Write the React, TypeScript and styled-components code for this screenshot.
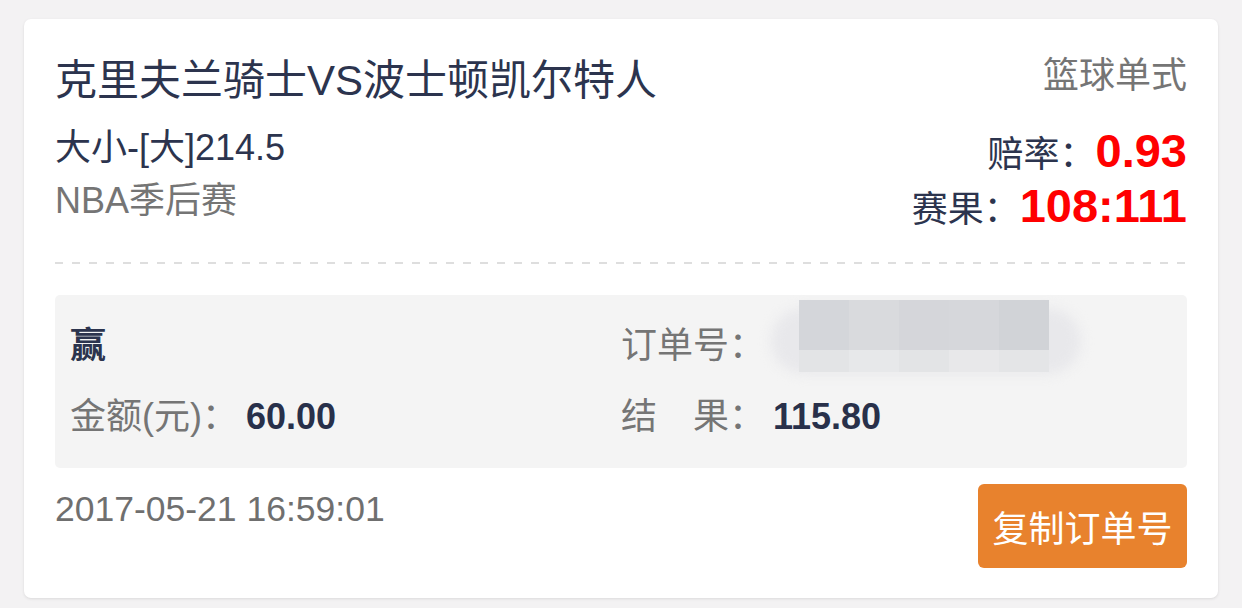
import React from "react";
import styled, { createGlobalStyle } from "styled-components";

const Global = createGlobalStyle`
  html, body { margin: 0; padding: 0; background: #f3f2f3; }
  body { font-family: "Liberation Sans", "Noto Sans CJK SC", sans-serif; }
`;

const Page = styled.div`
  padding: 19px 24px 10px;
`;

const Card = styled.div`
  background: #fff;
  border-radius: 7px;
  box-shadow: 0 1px 3px rgba(0, 0, 0, 0.1);
  padding: 32px 31px 30px;
`;

const Header = styled.div`
  display: flex;
  justify-content: space-between;
  align-items: flex-start;
`;

const LeftCol = styled.div`
  display: flex;
  flex-direction: column;
`;

const RightCol = styled.div`
  display: flex;
  flex-direction: column;
  align-items: flex-end;
`;

const Title = styled.div`
  font-size: 42px;
  line-height: 60px;
  color: #2c344e;
`;

const Line = styled.div<{ $muted?: boolean; $top?: number }>`
  font-size: 36px;
  line-height: 53px;
  margin-top: ${(p) => p.$top ?? 0}px;
  color: ${(p) => (p.$muted ? "#757575" : "#2c344e")};
`;

const Kind = styled.div`
  font-size: 36px;
  line-height: 50px;
  color: #757575;
  margin-bottom: 22px;
`;

const StatRow = styled.div`
  display: flex;
  align-items: baseline;
  height: 55px;
  line-height: 55px;
`;

const StatLabel = styled.span`
  font-size: 36px;
  color: #2c344e;
`;

const StatValue = styled.span`
  font-size: 47px;
  font-weight: bold;
  color: #ff0000;
`;

const Divider = styled.div`
  margin-top: 29px;
  height: 2px;
  background-image: repeating-linear-gradient(
    to right,
    #dedede 0,
    #dedede 8px,
    transparent 8px,
    transparent 17px
  );
`;

const InfoBox = styled.div`
  margin-top: 31px;
  background: #f4f4f4;
  border-radius: 5px;
  padding: 26px 15px 26px;
  display: grid;
  grid-template-columns: 1fr 1fr;
  row-gap: 21px;
`;

const Cell = styled.div`
  display: flex;
  align-items: center;
  height: 50px;
  font-size: 36px;
  line-height: 50px;
`;

const Outcome = styled.span`
  font-weight: bold;
  color: #2c344e;
`;

const InfoLabel = styled.span`
  color: #757575;
  white-space: pre;
`;

const InfoValue = styled.span`
  margin-left: 8px;
  font-size: 36px;
  font-weight: bold;
  color: #28304a;
`;

const Redacted = styled.div`
  position: relative;
  width: 324px;
  height: 78px;
  margin: -21px 0 -7px 2px;
`;

const Halo = styled.div`
  position: absolute;
  left: 4px;
  right: 10px;
  top: 8px;
  bottom: 4px;
  border-radius: 36px;
  background: #e8e8eb;
  filter: blur(6px);
`;

const PixelGrid = styled.div`
  position: absolute;
  left: 32px;
  top: 0;
  display: grid;
  grid-template-columns: repeat(5, 50px);
  grid-template-rows: 50px 22px;
`;

const Pixel = styled.div<{ $c: string }>`
  background: ${(p) => p.$c};
`;

const Footer = styled.div`
  margin-top: 16px;
  display: flex;
  justify-content: space-between;
  align-items: flex-start;
`;

const DateText = styled.div`
  font-size: 35.5px;
  line-height: 50px;
  color: #6f6f6f;
`;

const CopyButton = styled.button`
  width: 209px;
  height: 84px;
  border: none;
  border-radius: 6px;
  background: #e8822d;
  color: #fff;
  font-family: inherit;
  font-size: 36px;
  padding: 0;
  cursor: pointer;
`;

const pixels = [
  "#d4d6da",
  "#d9dadd",
  "#d5d6da",
  "#d6d7db",
  "#d1d3d7",
  "#e3e4e6",
  "#e7e8ea",
  "#e3e4e6",
  "#e8e8ea",
  "#e4e5e7",
];

export default function App() {
  return (
    <>
      <Global />
      <Page>
        <Card>
          <Header>
            <LeftCol>
              <Title>克里夫兰骑士VS波士顿凯尔特人</Title>
              <Line $top={10}>大小-[大]214.5</Line>
              <Line $muted>NBA季后赛</Line>
            </LeftCol>
            <RightCol>
              <Kind>篮球单式</Kind>
              <StatRow>
                <StatLabel>赔率：</StatLabel>
                <StatValue>0.93</StatValue>
              </StatRow>
              <StatRow>
                <StatLabel>赛果：</StatLabel>
                <StatValue>108:111</StatValue>
              </StatRow>
            </RightCol>
          </Header>
          <Divider />
          <InfoBox>
            <Cell>
              <Outcome>赢</Outcome>
            </Cell>
            <Cell>
              <InfoLabel>订单号：</InfoLabel>
              <Redacted>
                <Halo />
                <PixelGrid>
                  {pixels.map((c, i) => (
                    <Pixel key={i} $c={c} />
                  ))}
                </PixelGrid>
              </Redacted>
            </Cell>
            <Cell>
              <InfoLabel>金额(元)：</InfoLabel>
              <InfoValue>60.00</InfoValue>
            </Cell>
            <Cell>
              <InfoLabel>结　果：</InfoLabel>
              <InfoValue>115.80</InfoValue>
            </Cell>
          </InfoBox>
          <Footer>
            <DateText>2017-05-21 16:59:01</DateText>
            <CopyButton>复制订单号</CopyButton>
          </Footer>
        </Card>
      </Page>
    </>
  );
}
